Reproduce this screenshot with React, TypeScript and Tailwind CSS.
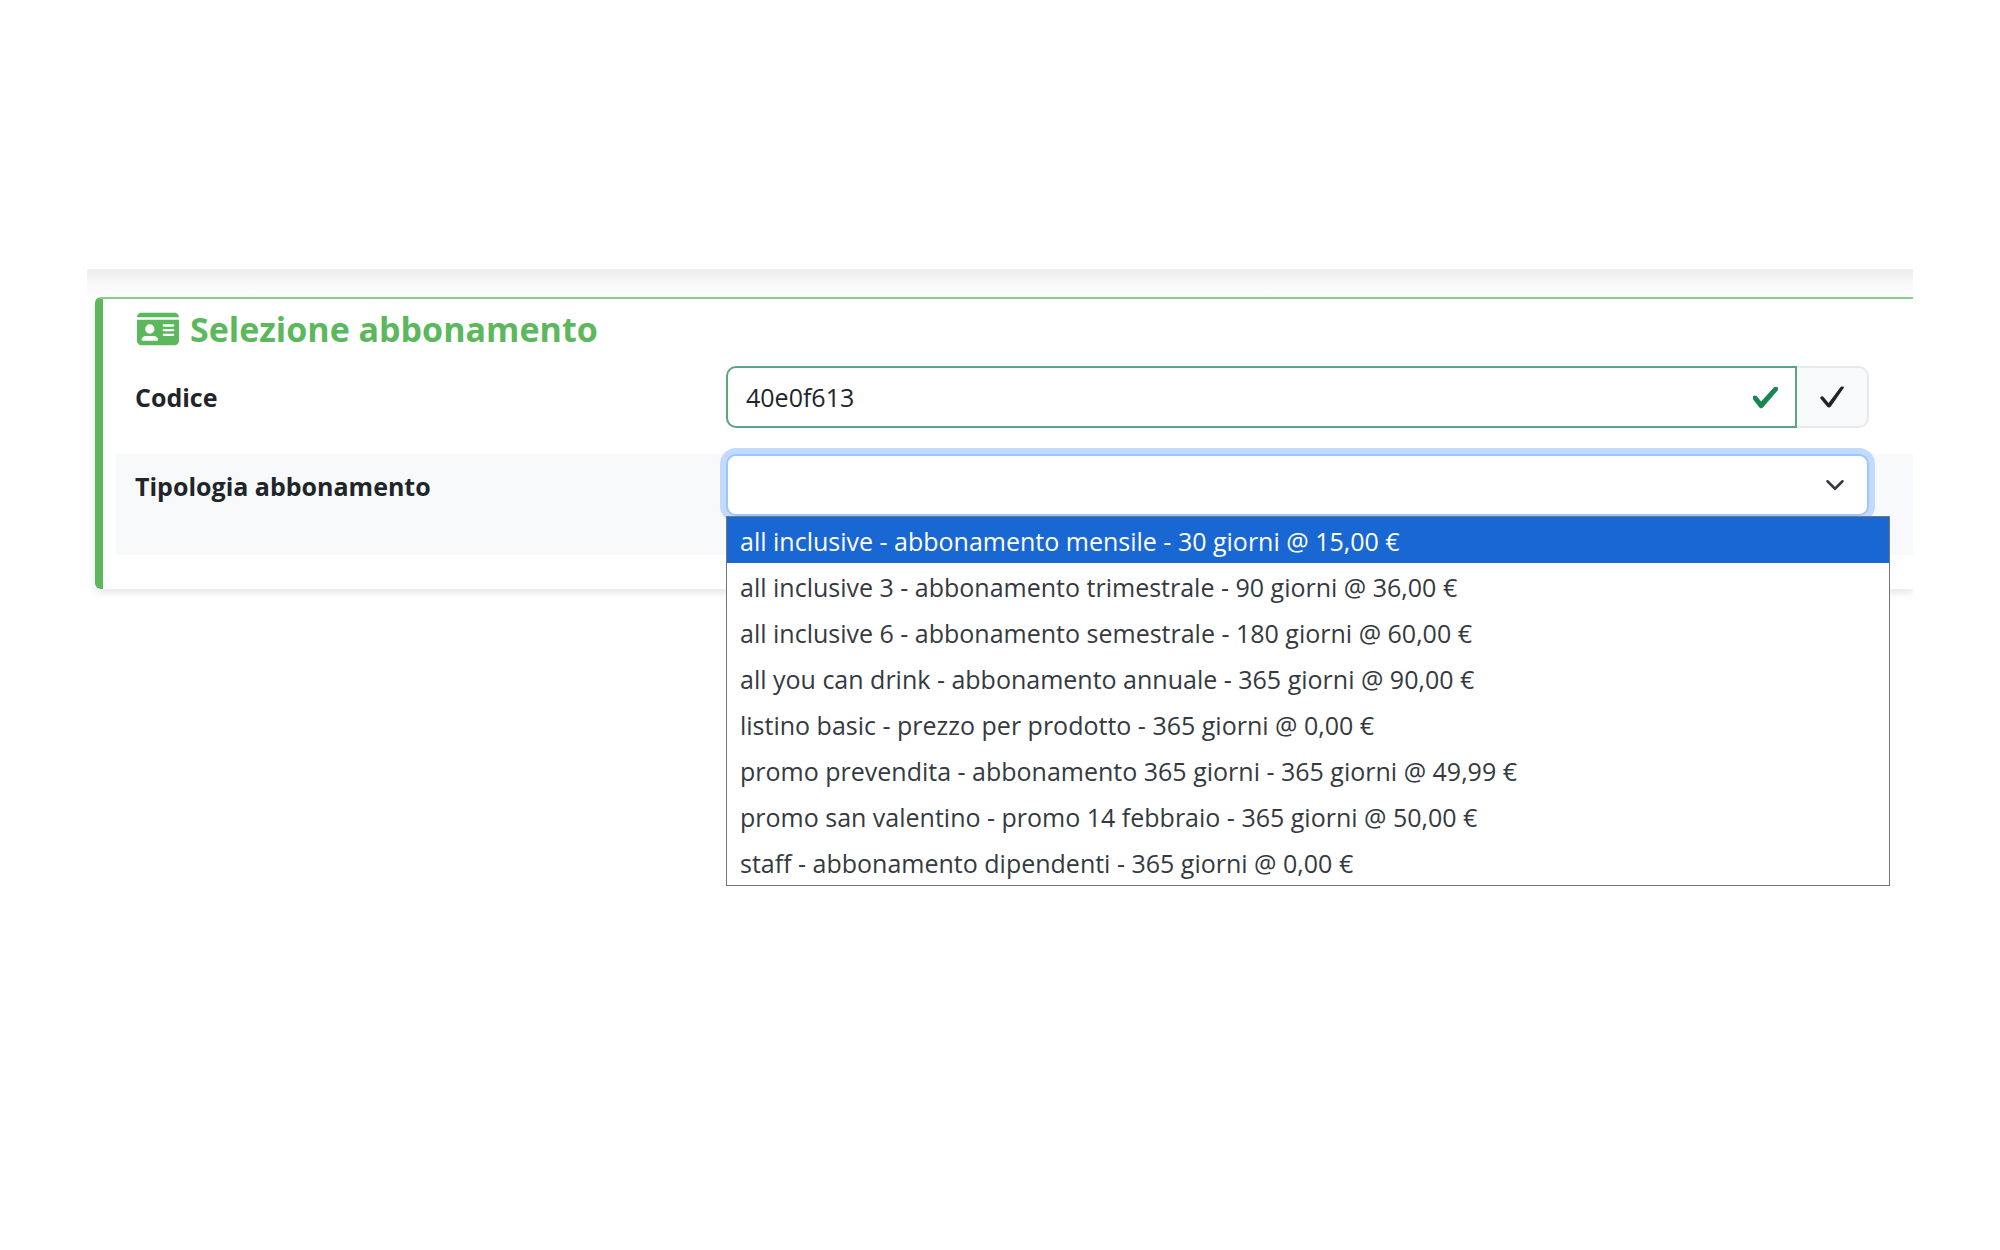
import { useState } from "react";
import { FaIdCard } from "react-icons/fa6";

const subscriptions = [
  "all inclusive - abbonamento mensile - 30 giorni @ 15,00 €",
  "all inclusive 3 - abbonamento trimestrale - 90 giorni @ 36,00 €",
  "all inclusive 6 - abbonamento semestrale - 180 giorni @ 60,00 €",
  "all you can drink - abbonamento annuale - 365 giorni @ 90,00 €",
  "listino basic - prezzo per prodotto - 365 giorni @ 0,00 €",
  "promo prevendita - abbonamento 365 giorni - 365 giorni @ 49,99 €",
  "promo san valentino - promo 14 febbraio - 365 giorni @ 50,00 €",
  "staff - abbonamento dipendenti - 365 giorni @ 0,00 €",
];

function ValidIcon() {
  return (
    <svg
      viewBox="0 0 8 8"
      className="absolute right-[17px] top-0 bottom-0 my-auto size-[29px] fill-[#198754] pointer-events-none"
      aria-hidden="true"
    >
      <path d="M2.3 6.73.6 4.53c-.4-1.04.46-1.4 1.1-.8l1.1 1.4 3.4-3.8c.6-.63 1.6-.27 1.2.7l-4 4.6c-.43.5-.8.4-1.1.1z" />
    </svg>
  );
}

function CheckIcon() {
  return (
    <svg
      viewBox="0 0 26 26"
      className="size-[26px]"
      fill="currentColor"
      aria-hidden="true"
    >
      <path d="M1.4 14.6c-.5-.9.1-2 1.1-2.2.9-.2 1.7.1 2.2.8l4.9 5.7L21.2 3.4c.4-.6 1-.9 1.7-.9h1.2c.8 0 1.1.8.6 1.4L11.9 22.6c-1 1.3-2.9 1.3-3.9 0z" />
    </svg>
  );
}

function ChevronIcon() {
  return (
    <svg
      viewBox="0 0 16 16"
      className="absolute right-6 top-0 bottom-0 my-auto size-5 pointer-events-none"
      fill="none"
      stroke="#343a40"
      strokeWidth="2"
      strokeLinecap="round"
      strokeLinejoin="round"
      aria-hidden="true"
    >
      <path d="m2 5 6 6 6-6" />
    </svg>
  );
}

function SubscriptionMenu({ active, onSelect }: any) {
  return (
    <ul
      role="listbox"
      aria-label="Tipologia abbonamento"
      className="absolute top-full left-0 -right-[21px] z-10 border border-[#767676] bg-white text-[25px]"
    >
      {subscriptions.map((label: string, index: number) => (
        <li
          key={label}
          role="option"
          aria-selected={index === active}
          onClick={() => onSelect(index)}
          className={`h-[46px] pl-[13px] leading-[48px] whitespace-nowrap ${
            index === active ? "bg-[#1967d2] text-white" : "text-[#343a40]"
          }`}
        >
          {label}
        </li>
      ))}
    </ul>
  );
}

function App() {
  const [code, setCode] = useState<string>("40e0f613");
  const [active, setActive] = useState<number>(0);

  return (
    <div className="min-h-screen bg-white px-[87px] pt-[269px] font-['Open_Sans','Noto_Sans',sans-serif] text-[#212529]">
      <div className="overflow-x-clip pb-80">
        <div className="h-7 bg-linear-to-b from-[#ececec] via-[#f8f8f8] to-[#fdfdfd]"></div>

        <section className="ml-2 rounded-l-md border-l-8 border-t-2 border-l-[#5cb85c] border-t-[#8dcb8d] bg-white pl-[13px] pb-[34px] shadow-[0_4px_8px_rgba(0,0,0,0.1)]">
          <h2 className="flex items-center gap-[11px] pb-[7px] pl-[21px] h-[67px] text-[34px] font-bold text-[#5cb85c]">
            <FaIdCard className="size-[42px]" />
            Selezione abbonamento
          </h2>

          <div className="grid grid-cols-3 pr-6 pb-[26px]">
            <label
              htmlFor="codice"
              className="px-[19px] leading-[62px] text-[25px] font-bold"
            >
              Codice
            </label>
            <div className="col-span-2 flex pl-[19px] pr-5">
              <div className="relative flex-1">
                <input
                  id="codice"
                  type="text"
                  value={code}
                  onChange={(e: any) => setCode(e.target.value)}
                  className="block w-full h-[62px] rounded-l-[10px] border-2 border-[#5aa583] px-[18px] text-[25px] outline-none"
                />
                <ValidIcon />
              </div>
              <button
                type="button"
                aria-label="Verifica"
                className="flex w-[72px] h-[62px] items-center justify-center rounded-r-[10px] border-2 border-l-0 border-[#e7eaed] bg-[#f8f9fa]"
              >
                <CheckIcon />
              </button>
            </div>
          </div>

          <div className="grid grid-cols-3 pr-6 pb-[37px] bg-[#f8f9fb]">
            <label
              htmlFor="tipologia"
              className="px-[19px] leading-[64px] text-[25px] font-bold"
            >
              Tipologia abbonamento
            </label>
            <div className="col-span-2 pl-[19px] pr-5">
              <div className="relative">
                <select
                  id="tipologia"
                  className="block w-full h-[62px] appearance-none rounded-[10px] border-2 border-[#9ec5fe] bg-white px-[18px] text-[25px] outline-none ring-6 ring-[#c2dafe]"
                >
                  <option value=""></option>
                </select>
                <ChevronIcon />
                <SubscriptionMenu active={active} onSelect={setActive} />
              </div>
            </div>
          </div>
        </section>
      </div>
    </div>
  );
}

export default App;
